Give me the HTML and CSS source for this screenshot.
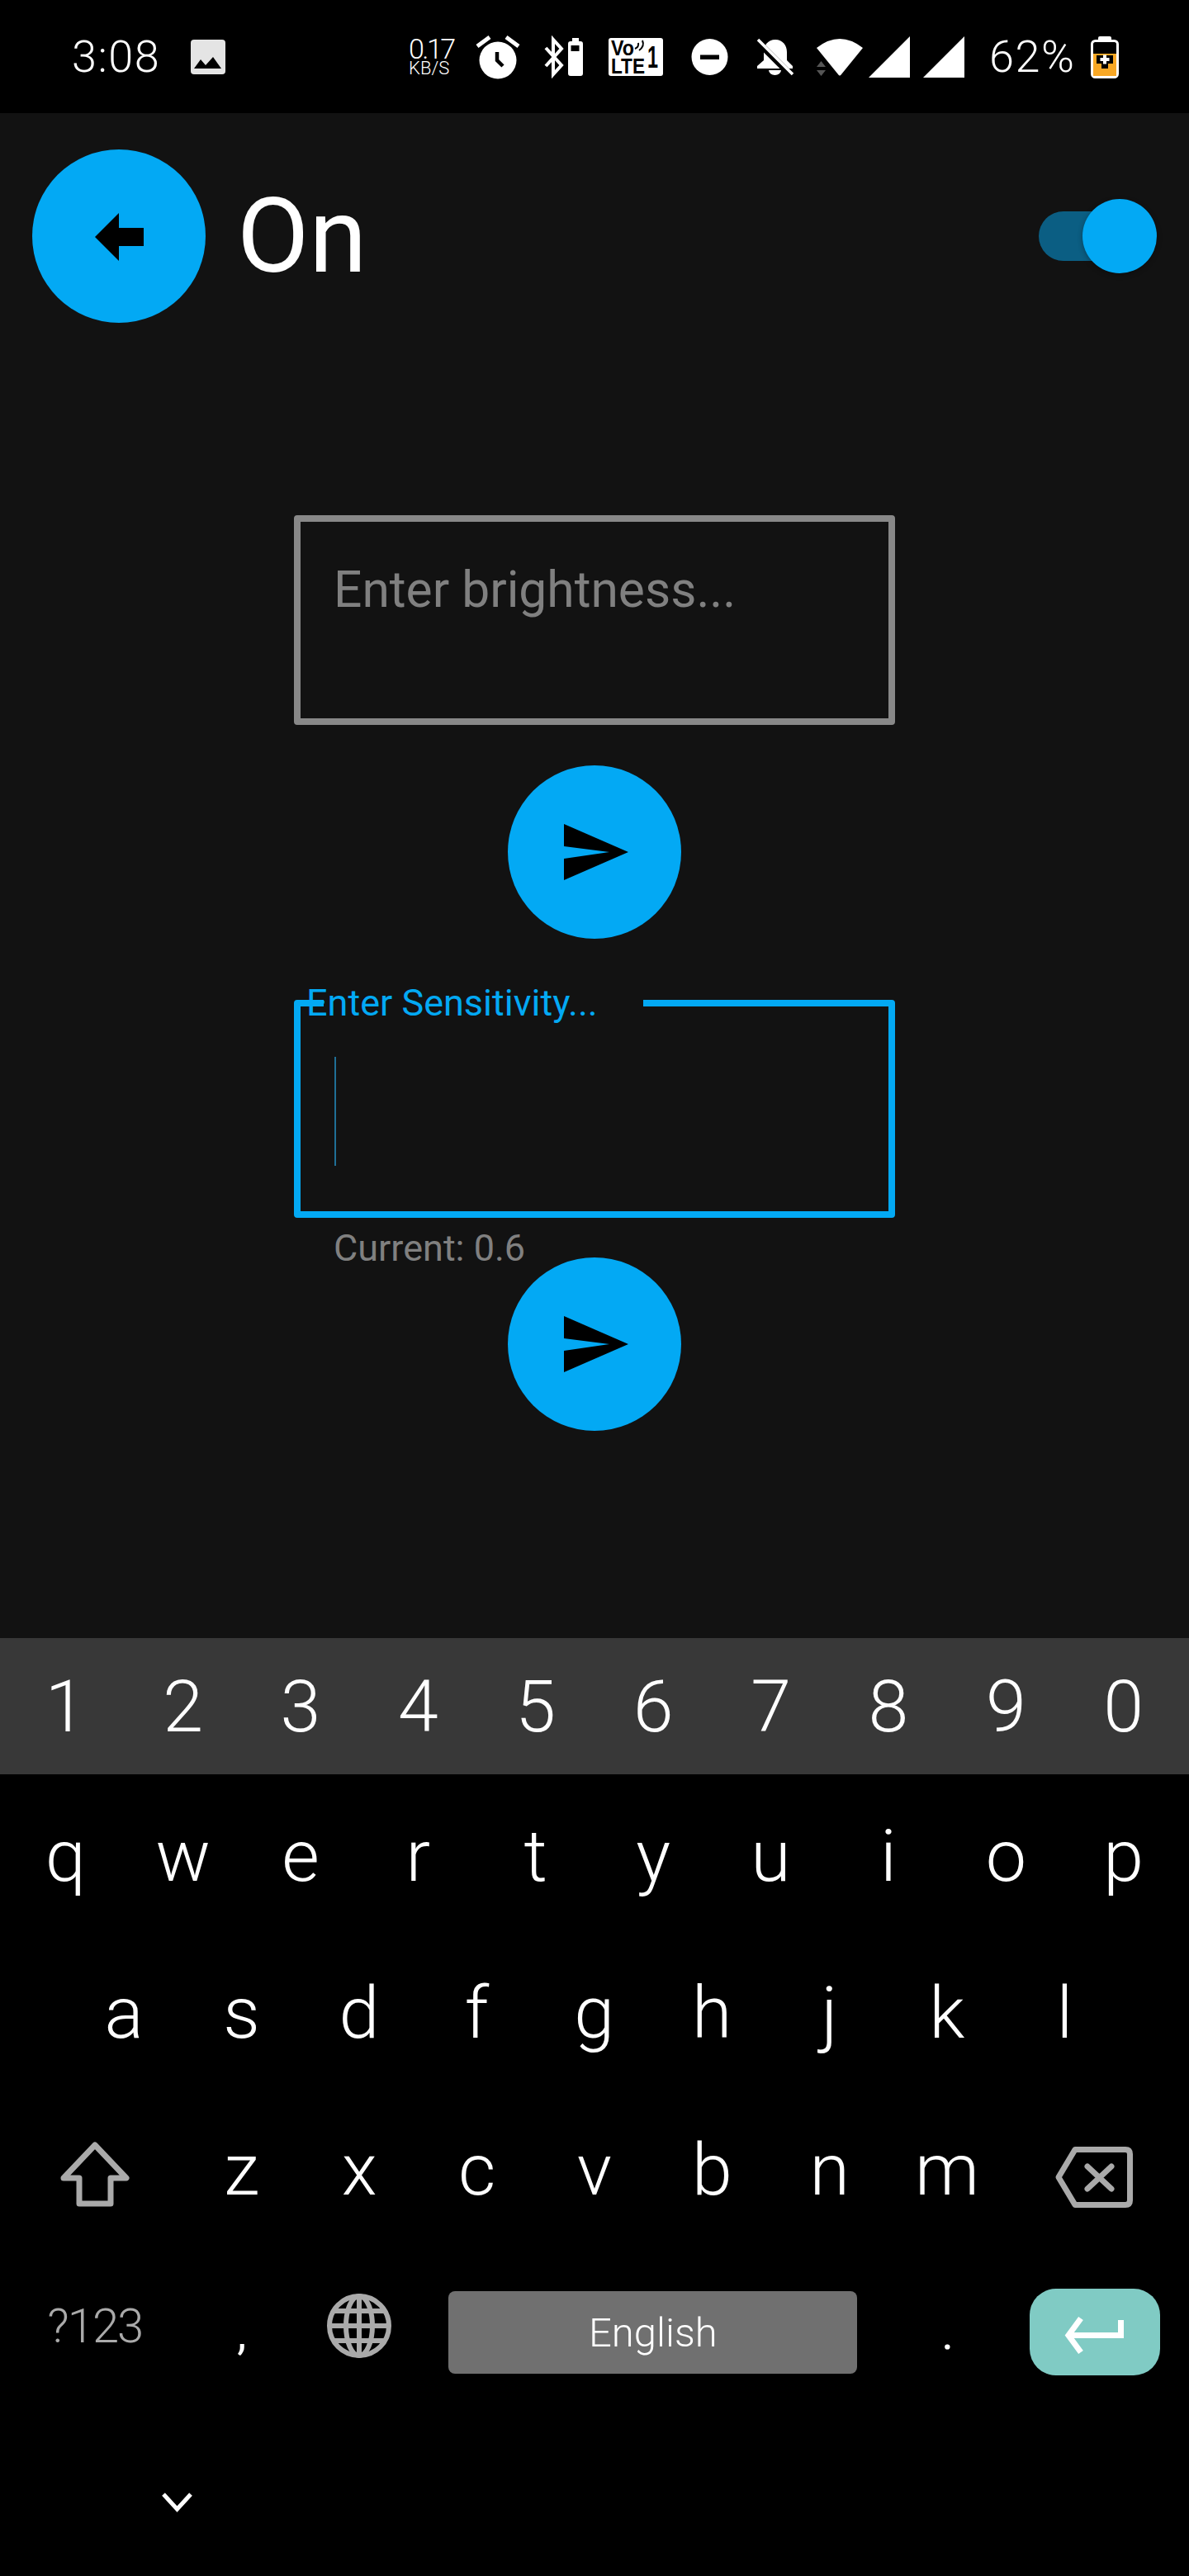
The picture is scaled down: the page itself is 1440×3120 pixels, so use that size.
FILE: index.html
```html
<!DOCTYPE html>
<html lang="en">
<head>
    <meta charset="UTF-8">
    <title>Brightness</title>
    <link rel="stylesheet" href="styles.css">
</head>
<body>
<div class="status">
    <div class="time">3:08</div>
    <svg class="ic-image" viewBox="0 0 42 42"><rect width="42" height="42" rx="4" fill="#e4e4e4"/><path d="M4 35 12 24 18 31 27 21 37 35Z" fill="#000"/></svg>
    <div class="net"><span class="net-num">0.17</span><span class="net-unit">KB/S</span></div>
    <svg class="ic-alarm" viewBox="0 0 53 53"><circle cx="27" cy="30" r="22.500" fill="#fff"/><path d="M2 13 17 2M37 2 52 13" stroke="#fff" stroke-width="5" fill="none"/><path d="M26 20V30L33 37" stroke="#000" stroke-width="4.500" fill="none"/></svg>
    <svg class="ic-bt" viewBox="0 0 23 46"><path d="M2 12 21 33 11 44V2L21 13 2 34" stroke="#fff" stroke-width="4" fill="none"/></svg>
    <svg class="ic-cell" viewBox="0 0 18 46"><path d="M5 0H13V4H15Q18 4 18 7V43Q18 46 15 46H3Q0 46 0 43V7Q0 4 3 4H5Z" fill="#fff"/><rect x="3.500" y="9" width="10" height="7" fill="#000"/></svg>
    <svg class="ic-volte" viewBox="0 0 66 46">
        <rect width="66" height="46" rx="3" fill="#fff"/>
        <text x="3" y="21" class="volte-txt" textLength="28" lengthAdjust="spacingAndGlyphs">Vo</text>
        <text x="3" y="43" class="volte-txt" textLength="41" lengthAdjust="spacingAndGlyphs">LTE</text>
        <text x="47" y="36" class="volte-one" textLength="13" lengthAdjust="spacingAndGlyphs">1</text>
        <path d="M32 13Q37 11 36 6M37 15Q44 10 41 3" stroke="#000" stroke-width="2" fill="none"/>
    </svg>
    <svg class="ic-dnd" viewBox="0 0 45 44"><circle cx="22.500" cy="22" r="22" fill="#fff"/><rect x="11" y="19.500" width="23" height="5.500" fill="#000"/></svg>
    <svg class="ic-bell" viewBox="0 0 45 44"><path d="M23 1C32 1 37 8 37 16V26L44 33V36H1V33L9 26V16C9 8 14 1 23 1Z" fill="#fff"/><path d="M15 38H30A7.500 6 0 0 1 15 38Z" fill="#fff"/><path d="M0 2 43 45" stroke="#000" stroke-width="8"/><path d="M2 1 44 43" stroke="#fff" stroke-width="3.500"/></svg>
    <svg class="ic-wifi" viewBox="0 0 56 45"><path d="M0 11Q28-11 56 11L30 43Q28 46 26 43Z" fill="#fff"/><path d="M5.500 27 11 34H0ZM0 38H11L5.500 45Z" fill="#555"/></svg>
    <svg class="ic-signal" viewBox="0 0 50 50"><path d="M0 50 50 0V50Z" fill="#fff"/></svg>
    <svg class="ic-signal ic-signal2" viewBox="0 0 50 50"><path d="M0 50 50 0V50Z" fill="#fff"/></svg>
    <div class="pct">62%</div>
    <svg class="ic-batt" viewBox="0 0 34 51">
        <rect x="9" y="0" width="16" height="8" rx="2" fill="#fff"/>
        <rect x="1.500" y="5.500" width="31" height="44" rx="4" fill="#000" stroke="#fff" stroke-width="3"/>
        <rect x="3" y="21" width="28" height="27" fill="#f9a825"/>
        <path d="M7 23H27V33H21V39H13V33H7Z" fill="#000"/>
        <path d="M15 22.500H19V26H22.500V30H19V33.500H15V30H11.500V26H15Z" fill="#fff"/>
    </svg>
</div>

<div class="screen">
    <div class="top">
        <div class="fab">
            <svg class="back-ic" viewBox="0 0 59 58"><path d="M0 29 29 0V18H59V40H29V58Z" fill="#000"/></svg>
        </div>
        <div class="title">On</div>
        <div class="toggle">
            <div class="toggle-track"></div>
            <div class="toggle-thumb"></div>
        </div>
    </div>

    <div class="form">
        <div class="field field-idle">Enter brightness...</div>
        <div class="fab fab-send">
            <svg class="send-ic" viewBox="0 0 78 68"><path d="M0 0 78 34 0 68V42L55 34 0 27Z" fill="#000"/></svg>
        </div>

        <div class="field field-focus">
            <div class="field-gap"></div>
            <div class="field-label">Enter Sensitivity...</div>
            <div class="caret"></div>
        </div>
        <div class="hint">Current: 0.6</div>
        <div class="fab">
            <svg class="send-ic" viewBox="0 0 78 68"><path d="M0 0 78 34 0 68V42L55 34 0 27Z" fill="#000"/></svg>
        </div>
    </div>
</div>

<div class="kb">
    <div class="kb-row kb-nums">
        <div class="key">1</div><div class="key">2</div><div class="key">3</div><div class="key">4</div><div class="key">5</div><div class="key">6</div><div class="key">7</div><div class="key">8</div><div class="key">9</div><div class="key">0</div>
    </div>
    <div class="kb-row">
        <div class="key">q</div><div class="key">w</div><div class="key">e</div><div class="key">r</div><div class="key">t</div><div class="key">y</div><div class="key">u</div><div class="key">i</div><div class="key">o</div><div class="key">p</div>
    </div>
    <div class="kb-row kb-home">
        <div class="key">a</div><div class="key">s</div><div class="key">d</div><div class="key">f</div><div class="key">g</div><div class="key">h</div><div class="key">j</div><div class="key">k</div><div class="key">l</div>
    </div>
    <div class="kb-row">
        <div class="key key-wide">
            <svg class="shift-ic" viewBox="0 0 84 80"><path d="M42 5 80 45H61V76H23V45H4Z" fill="none" stroke="#aaa" stroke-width="7" stroke-linejoin="round"/></svg>
        </div>
        <div class="key">z</div><div class="key">x</div><div class="key">c</div><div class="key">v</div><div class="key">b</div><div class="key">n</div><div class="key">m</div>
        <div class="key key-wide">
            <svg class="del-ic" viewBox="0 0 94 74"><path d="M24 3.500H85Q90.500 3.500 90.500 9V65Q90.500 70.500 85 70.500H24L4 37Z" fill="none" stroke="#aaa" stroke-width="7" stroke-linejoin="round"/><path d="M39 24 68 51M68 24 39 51" stroke="#aaa" stroke-width="7" stroke-linecap="round"/></svg>
        </div>
    </div>
    <div class="kb-row">
        <div class="key key-wide key-sym">?123</div>
        <div class="key key-punct">,</div>
        <div class="key">
            <svg class="globe-ic" viewBox="0 0 80 80" fill="none" stroke="#aaa" stroke-width="6"><circle cx="40" cy="40" r="36"/><ellipse cx="40" cy="40" rx="16" ry="36"/><path d="M9 22H71M9 58H71M4 40H76M40 4V76"/></svg>
        </div>
        <div class="key key-space"><div class="space-bar">English</div></div>
        <div class="key key-punct">.</div>
        <div class="key key-wide">
            <div class="enter">
                <svg class="enter-ic" viewBox="0 0 71 45"><path d="M67.500 4V22.500H6M19 2 4 22.500 19 43" fill="none" stroke="#fff" stroke-width="7"/></svg>
            </div>
        </div>
    </div>
    <div class="kb-foot">
        <svg class="chev-ic" viewBox="0 0 37 23"><path d="M2 2 18.500 20 35 2" fill="none" stroke="#fff" stroke-width="5"/></svg>
    </div>
</div>
</body>
</html>
```

FILE: styles.css
```css
*{
    box-sizing: border-box;
}
html,body{
    margin:0;
    padding:0;
}
body{
    width:1440px;
    height:3120px;
    background-color:#000;
    font-family: Roboto, "Liberation Sans", sans-serif;
    color:#fff;
    display: flex;
    flex-direction: column;
    overflow: hidden;
}
svg{
    display: block;
    flex-shrink: 0;
    overflow: visible;
}

/* status bar */
.status{
    height:137px;
    padding:1px 0 0 87px;
    display: flex;
    align-items: center;
    background-color:#000;
}
.time,.pct{
    font-size:54px;
    font-weight:300;
    line-height:60px;
    letter-spacing:1.5px;
    white-space: nowrap;
}
.time{
    width:106px;
}
.pct{
    width:106px;
    margin-left:30px;
}
.ic-image{
    width:42px;
    height:42px;
    margin-left:38px;
}
.net{
    width:52px;
    margin-left:222px;
    display: flex;
    flex-direction: column;
    font-weight:300;
}
.net-num{
    font-size:34px;
    line-height:28px;
    letter-spacing:-2.5px;
}
.net-unit{
    font-size:22px;
    line-height:20px;
    white-space: nowrap;
}
.ic-alarm{
    width:53px;
    height:53px;
    margin-left:29px;
}
.ic-bt{
    width:23px;
    height:46px;
    margin-left:30px;
}
.ic-cell{
    width:18px;
    height:46px;
    margin-left:6px;
}
.ic-volte{
    width:66px;
    height:46px;
    margin-left:31px;
}
.volte-txt{
    font-family:"Liberation Sans", sans-serif;
    font-weight:700;
    font-size:25px;
    fill:#000;
}
.volte-one{
    font-family:"Liberation Sans", sans-serif;
    font-weight:700;
    font-size:36px;
    fill:#000;
}
.ic-dnd{
    width:45px;
    height:44px;
    margin-left:34px;
}
.ic-bell{
    width:45px;
    height:44px;
    margin-left:34px;
}
.ic-wifi{
    width:56px;
    height:45px;
    margin-left:28px;
}
.ic-signal{
    width:50px;
    height:50px;
    margin-left:7px;
}
.ic-signal2{
    margin-left:16px;
}
.ic-batt{
    width:34px;
    height:51px;
    margin-left:17px;
}

/* app screen */
.screen{
    flex:1;
    background-color:#121212;
}
.top{
    display: flex;
    align-items: center;
    padding:44px 39px 0;
}
.fab{
    width:210px;
    height:210px;
    border-radius:50%;
    background-color:#03a9f4;
    display: flex;
    align-items: center;
    justify-content: center;
    flex-shrink: 0;
}
.back-ic{
    width:59px;
    height:58px;
    margin-top:2px;
}
.title{
    font-size:127px;
    line-height:150px;
    margin-left:38px;
}
.toggle{
    position: relative;
    width:143px;
    height:90px;
    margin-left:auto;
}
.toggle-track{
    width:128px;
    height:60px;
    margin-top:15px;
    border-radius:30px;
    background-color:rgba(3,169,244,.5);
}
.toggle-thumb{
    position: absolute;
    top:0;
    right:0;
    width:90px;
    height:90px;
    border-radius:50%;
    background-color:#03a9f4;
    box-shadow:0 2px 6px rgba(0,0,0,.3);
}
.form{
    display: flex;
    flex-direction: column;
    align-items: center;
    padding-top:233px;
}
.field{
    width:728px;
    border-radius:4px;
    position: relative;
}
.field-idle{
    height:254px;
    border:8px solid #888;
    padding:53px 0 0 40px;
    font-size:60.5px;
    line-height:60px;
    color:#808080;
}
.fab-send{
    margin-top:49px;
}
.send-ic{
    width:78px;
    height:68px;
    margin-left:4px;
}
.field-focus{
    height:264px;
    margin-top:74px;
    border:8px solid #03a9f4;
    padding:61px 0 0 41px;
}
.field-gap{
    position: absolute;
    top:-8px;
    left:28px;
    width:387px;
    height:8px;
    background-color:#121212;
}
.field-label{
    position: absolute;
    top:-27px;
    left:7px;
    font-size:45px;
    line-height:45px;
    color:#03a9f4;
    white-space: nowrap;
}
.caret{
    width:2px;
    height:132px;
    background-color:#1f6f96;
}
.hint{
    width:728px;
    height:48px;
    padding-left:48px;
    font-size:45px;
    line-height:74px;
    color:#808080;
}

/* keyboard */
.kb{
    height:1136px;
    background-color:#000;
}
.kb-row{
    display: flex;
    height:190px;
    padding:0 8px;
}
.kb-nums{
    height:165px;
    background-color:#383838;
    margin-bottom:3px;
}
.kb-home{
    padding-left:79px;
}
.key{
    width:142.4px;
    display: flex;
    align-items: center;
    justify-content: center;
    font-size:88px;
    font-weight:300;
    flex-shrink: 0;
}
.key-wide{
    width:213.6px;
}
.key-sym{
    font-size:58px;
    color:#aaa;
    letter-spacing:-2px;
}
.key-punct{
    font-size:56px;
    font-weight:400;
    padding-top:18px;
}
.key-space{
    width:570px;
    padding:16px 38px 0 37px;
}
.space-bar{
    width:100%;
    height:100px;
    border-radius:8px;
    background-color:#707070;
    display: flex;
    align-items: center;
    justify-content: center;
    font-size:49px;
}
.enter{
    width:158px;
    height:105px;
    margin-top:15px;
    border-radius:32px;
    background-color:#80cbc4;
    display: flex;
    align-items: center;
    justify-content: center;
}
.enter-ic{
    width:71px;
    height:45px;
    margin-top:8px;
}
.shift-ic{
    width:84px;
    height:80px;
    margin-top:12px;
}
.del-ic{
    width:94px;
    height:74px;
    margin-top:20px;
}
.globe-ic{
    width:80px;
    height:80px;
}
.kb-foot{
    height:208px;
    padding:107px 0 0 196px;
}
.chev-ic{
    width:37px;
    height:23px;
}
```
